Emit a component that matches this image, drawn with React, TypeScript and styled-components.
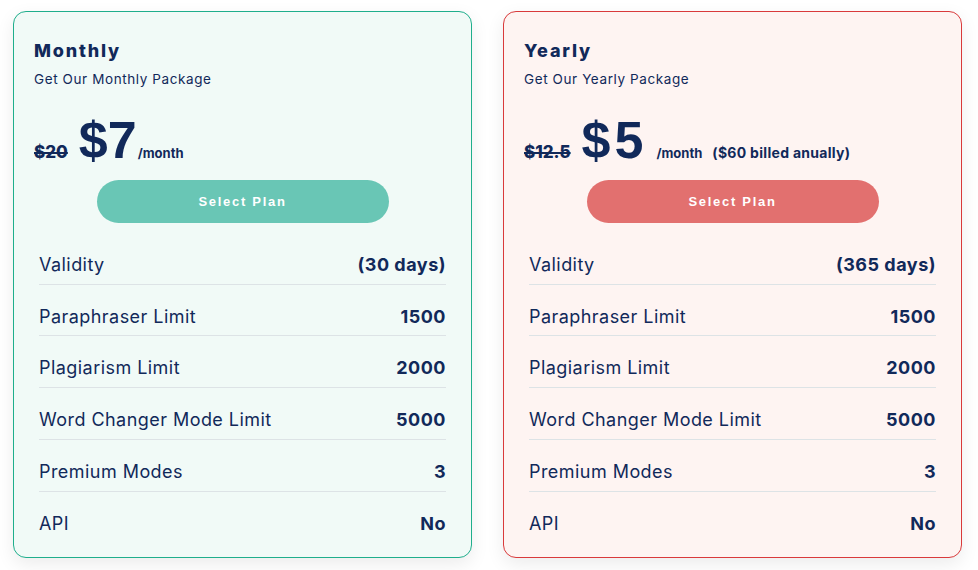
import React from "react";
import styled, { createGlobalStyle } from "styled-components";

const Global = createGlobalStyle`
  html, body { margin: 0; padding: 0; background: #ffffff; }
  body { font-family: "Inter", "Noto Sans", sans-serif; color: #11295a; }
`;

const Page = styled.div`
  display: grid;
  grid-template-columns: 459px 459px;
  column-gap: 31px;
  padding: 11px 16px 13px 13px;
`;

type Tone = "green" | "red";

const palette = {
  green: { bg: "#f1faf7", border: "#1fae8c", button: "#69c6b5" },
  red: { bg: "#fef4f2", border: "#d93a3b", button: "#e2706f" },
};

const Card = styled.section<{ $tone: Tone }>`
  display: flex;
  flex-direction: column;
  background: ${(p) => palette[p.$tone].bg};
  border: 1px solid ${(p) => palette[p.$tone].border};
  border-radius: 13px;
  box-shadow: 0 6px 18px rgba(0, 0, 0, 0.08);
  padding: 27px 0 15px;
`;

const Header = styled.div`
  padding: 0 20px;
`;

const Title = styled.h2`
  margin: 0;
  font-family: "Inter", sans-serif;
  font-weight: 800;
  font-size: 18px;
  line-height: 24px;
  letter-spacing: 1.8px;
  color: #11295a;
`;

const Subtitle = styled.p`
  margin: 6px 0 0;
  font-size: 13.5px;
  line-height: 20px;
  letter-spacing: 0.6px;
  color: #11295a;
`;

const PriceRow = styled.div`
  display: flex;
  align-items: baseline;
  margin-top: 23px;
  height: 56px;
`;

const OldPrice = styled.span`
  font-weight: 800;
  font-size: 17px;
  text-decoration: line-through;
  text-decoration-thickness: 2px;
  margin-right: 11px;
`;

const NewPrice = styled.span<{ $spread?: boolean }>`
  font-family: "Liberation Sans", Arial, sans-serif;
  font-weight: 700;
  font-size: 52px;
  line-height: 56px;
  letter-spacing: ${(p) => (p.$spread ? "4px" : "0")};
  margin-right: 1px;
`;

const Per = styled.span<{ $gap?: number }>`
  font-weight: 700;
  font-size: 13px;
  margin-left: ${(p) => p.$gap ?? 0}px;
`;

const Billed = styled.span`
  font-weight: 700;
  font-size: 14px;
  margin-left: 10px;
  letter-spacing: 0.3px;
`;

const SelectButton = styled.button<{ $tone: Tone }>`
  align-self: center;
  width: 292px;
  height: 43px;
  margin-top: 12px;
  border: none;
  border-radius: 22px;
  background: ${(p) => palette[p.$tone].button};
  color: #ffffff;
  font-family: "Liberation Sans", Arial, sans-serif;
  font-weight: 700;
  font-size: 13px;
  letter-spacing: 1.7px;
  cursor: pointer;
`;

const Rows = styled.div`
  display: flex;
  flex-direction: column;
  padding: 10px 25px 0;
`;

const Row = styled.div<{ $last?: boolean }>`
  display: flex;
  justify-content: space-between;
  align-items: center;
  padding: 19px 0 5px;
  border-bottom: ${(p) => (p.$last ? "none" : "1px solid #dde3e6")};
  font-size: 18px;
  line-height: 26.7px;
`;

const Label = styled.span`
  font-weight: 400;
  letter-spacing: 0.45px;
  color: #11295a;
`;

const Value = styled.span`
  font-weight: 700;
  letter-spacing: 0.5px;
  color: #11295a;
`;

type Plan = {
  tone: Tone;
  title: string;
  subtitle: string;
  old: string;
  price: string;
  perGap: number;
  billed?: string;
  validity: string;
};

const plans: Plan[] = [
  {
    tone: "green",
    title: "Monthly",
    subtitle: "Get Our Monthly Package",
    old: "$20",
    price: "$7",
    perGap: 0,
    validity: "(30 days)",
  },
  {
    tone: "red",
    title: "Yearly",
    subtitle: "Get Our Yearly Package",
    old: "$12.5",
    price: "$5",
    perGap: 8,
    billed: "($60 billed anually)",
    validity: "(365 days)",
  },
];

export default function App() {
  return (
    <>
      <Global />
      <Page>
        {plans.map((p) => {
          const rows: [string, string][] = [
            ["Validity", p.validity],
            ["Paraphraser Limit", "1500"],
            ["Plagiarism Limit", "2000"],
            ["Word Changer Mode Limit", "5000"],
            ["Premium Modes", "3"],
            ["API", "No"],
          ];
          return (
            <Card key={p.title} $tone={p.tone}>
              <Header>
                <Title>{p.title}</Title>
                <Subtitle>{p.subtitle}</Subtitle>
                <PriceRow>
                  <OldPrice>{p.old}</OldPrice>
                  <NewPrice $spread={p.tone === "red"}>{p.price}</NewPrice>
                  <Per $gap={p.perGap}>/month</Per>
                  {p.billed && <Billed>{p.billed}</Billed>}
                </PriceRow>
              </Header>
              <SelectButton $tone={p.tone}>Select Plan</SelectButton>
              <Rows>
                {rows.map(([l, v], i) => (
                  <Row key={l} $last={i === rows.length - 1}>
                    <Label>{l}</Label>
                    <Value>{v}</Value>
                  </Row>
                ))}
              </Rows>
            </Card>
          );
        })}
      </Page>
    </>
  );
}
